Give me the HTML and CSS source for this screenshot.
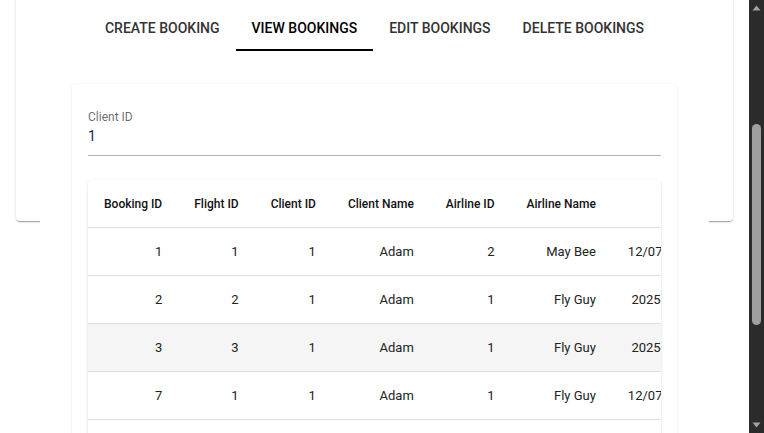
FILE: index.html
```html
<!DOCTYPE html>
<html lang="en">
<head>
<meta charset="utf-8">
<title>Bookings</title>
<link rel="stylesheet" href="styles.css">
</head>
<body>
<div class="viewport">
  <div class="page">
    <div class="shell">
      <nav class="tabs">
        <button class="tab">Create Booking</button>
        <button class="tab active">View Bookings</button>
        <button class="tab">Edit Bookings</button>
        <button class="tab">Delete Bookings</button>
      </nav>
      <section class="panel">
        <div class="card">
          <div class="field">
            <label class="field-label">Client ID</label>
            <div class="field-input">1</div>
          </div>
          <div class="table-wrap">
            <table class="bookings">
              <thead>
                <tr>
                  <th>Booking ID</th>
                  <th>Flight ID</th>
                  <th>Client ID</th>
                  <th>Client Name</th>
                  <th>Airline ID</th>
                  <th>Airline Name</th>
                  <th class="num-head">Date</th>
                </tr>
              </thead>
              <tbody>
                <tr><td>1</td><td>1</td><td>1</td><td>Adam</td><td>2</td><td>May Bee</td><td>12/07/2025 09:00</td></tr>
                <tr><td>2</td><td>2</td><td>1</td><td>Adam</td><td>1</td><td>Fly Guy</td><td>2025-07-15 10:30</td></tr>
                <tr class="hover"><td>3</td><td>3</td><td>1</td><td>Adam</td><td>1</td><td>Fly Guy</td><td>2025-07-18 14:00</td></tr>
                <tr><td>7</td><td>1</td><td>1</td><td>Adam</td><td>1</td><td>Fly Guy</td><td>12/07/2025 09:00</td></tr>
                <tr><td>8</td><td>2</td><td>1</td><td>Adam</td><td>1</td><td>Fly Guy</td><td>2025-07-20 08:15</td></tr>
              </tbody>
            </table>
          </div>
        </div>
      </section>
    </div>
  </div>
  <div class="scrollbar">
    <div class="sb-btn">
      <svg width="9" height="6" viewBox="0 0 9 6"><path d="M4.5 0.5 L8.5 5.5 L0.5 5.5 Z" fill="#a3a3a3"/></svg>
    </div>
    <div class="sb-track"><div class="sb-thumb"></div></div>
    <div class="sb-btn sb-btn-down">
      <svg width="9" height="6" viewBox="0 0 9 6"><path d="M0.5 0.5 L8.5 0.5 L4.5 5.5 Z" fill="#a3a3a3"/></svg>
    </div>
  </div>
</div>
</body>
</html>
```
FILE: styles.css
```css
* { box-sizing: border-box; }
html, body { margin: 0; padding: 0; background: #fff; }
body {
  font-family: Roboto, "Liberation Sans", Arial, sans-serif;
  color: rgba(0,0,0,0.87);
}
.viewport {
  display: flex;
  height: 433px;
  overflow: hidden;
}
.page {
  flex: 1;
  overflow: hidden;
}
.shell {
  margin: -13px 16px 0;
  height: 234px;
  padding: 16px 24px 0;
  background: #fff;
  border-radius: 4px;
  box-shadow: 0 2px 1px -1px rgba(0,0,0,0.2), 0 1px 1px 0 rgba(0,0,0,0.14), 0 1px 3px 0 rgba(0,0,0,0.12);
}
.tabs {
  display: flex;
  justify-content: center;
  height: 48px;
}
.tab {
  font-family: inherit;
  font-size: 14px;
  font-weight: 500;
  letter-spacing: 0;
  text-transform: uppercase;
  color: #333;
  background: none;
  border: 0;
  border-bottom: 2px solid transparent;
  padding: 4px 16px 0;
  height: 48px;
  cursor: pointer;
}
.tab.active {
  color: #000;
  border-bottom-color: #000;
}
.panel {
  position: relative;
  background: #fff;
  padding: 33px 32px 0;
}
.card {
  background: #fff;
  border-radius: 4px;
  padding: 16px;
  box-shadow: 0 0 2px rgba(0,0,0,0.10), 0 1px 2px rgba(0,0,0,0.05);
}
.field {
  margin-top: 9px;
}
.field-label {
  display: block;
  font-size: 12px;
  line-height: 16px;
  color: rgba(0,0,0,0.6);
}
.field-input {
  padding: 1px 0 9px;
  font-size: 14px;
  line-height: 20px;
  color: #20205a;
  border-bottom: 1px solid rgba(0,0,0,0.3);
}
.table-wrap {
  margin-top: 24px;
  border-radius: 4px;
  overflow: hidden;
  background: #fff;
  box-shadow: 0 2px 1px -1px rgba(0,0,0,0.2), 0 1px 1px 0 rgba(0,0,0,0.14), 0 1px 3px 0 rgba(0,0,0,0.12);
}
.bookings {
  border-collapse: collapse;
  white-space: nowrap;
}
.bookings th, .bookings td {
  height: 48px;
  padding: 0 16px;
  border-bottom: 1px solid #e0e0e0;
  vertical-align: middle;
}
.bookings th {
  height: 47px;
  padding-top: 1px;
  font-size: 12px;
  font-weight: 500;
  text-align: left;
  color: #111;
}
.bookings th.num-head { text-align: right; }
.bookings td {
  font-size: 13px;
  text-align: right;
  color: #222;
}
.bookings tr.hover td { background: #f5f5f5; }
.scrollbar {
  width: 15px;
  flex: none;
  background: #2b2b2b;
  display: flex;
  flex-direction: column;
}
.sb-btn {
  height: 17px;
  display: flex;
  justify-content: center;
  padding-top: 5px;
}
.sb-btn-down {
  padding-top: 6px;
}
.sb-track {
  flex: 1;
  padding: 107px 3px 0;
}
.sb-thumb {
  height: 201px;
  background: #9f9f9f;
  border-radius: 5px;
}
```
